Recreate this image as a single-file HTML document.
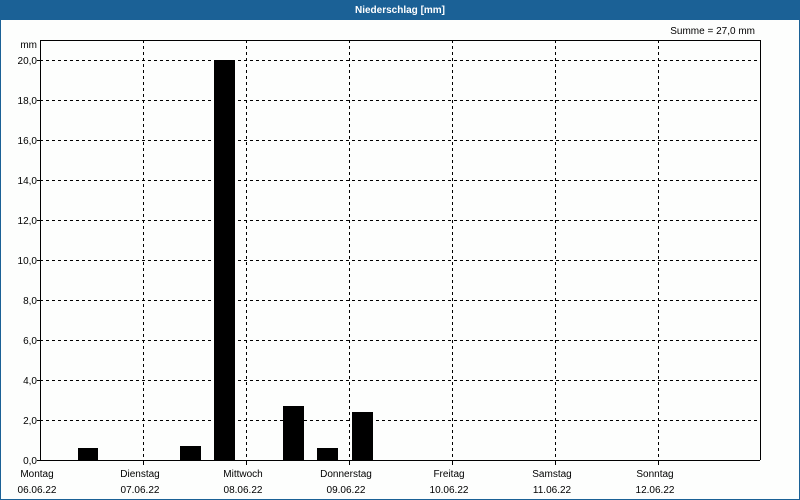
<!DOCTYPE html>
<html><head><meta charset="utf-8"><style>
html,body{margin:0;padding:0;background:#fff}
svg{display:block}
text{font-family:"Liberation Sans","DejaVu Sans",sans-serif;font-size:10px;fill:#000}
</style></head><body>
<svg width="800" height="500" viewBox="0 0 800 500" xmlns="http://www.w3.org/2000/svg">
<rect x="0" y="0" width="800" height="500" fill="#fdfefd"/>
<rect x="0.5" y="0.5" width="799" height="499" fill="none" stroke="#1b6196"/>
<rect x="0" y="0" width="800" height="20" fill="#1b6196"/>
<text x="400" y="13" text-anchor="middle" style="fill:#fff;font-weight:bold">Niederschlag [mm]</text>
<text x="755" y="34" text-anchor="end">Summe = 27,0 mm</text>
<text x="37" y="48" text-anchor="end">mm</text>
<g stroke="#000" stroke-width="1" stroke-dasharray="3,3" fill="none">
<path d="M40 60.5H760M40 100.5H760M40 140.5H760M40 180.5H760M40 220.5H760M40 260.5H760M40 300.5H760M40 340.5H760M40 380.5H760M40 420.5H760"/>
<path d="M143.5 40V460M246.5 40V460M349.5 40V460M452.5 40V460M555.5 40V460M658.5 40V460"/>
</g>
<g stroke="#000" stroke-width="1" fill="none">
<path d="M40.5 460V40.5H760.5V460"/>
<path d="M37 460.5H760"/>
<path d="M143.5 460V465M246.5 460V465M349.5 460V465M452.5 460V465M555.5 460V465M658.5 460V465"/>
<path d="M37 60.5H40M37 100.5H40M37 140.5H40M37 180.5H40M37 220.5H40M37 260.5H40M37 300.5H40M37 340.5H40M37 380.5H40M37 420.5H40"/>
</g>
<g text-anchor="end">
<text x="37" y="64">20,0</text><text x="37" y="104">18,0</text><text x="37" y="144">16,0</text>
<text x="37" y="184">14,0</text><text x="37" y="224">12,0</text><text x="37" y="264">10,0</text>
<text x="37" y="304">8,0</text><text x="37" y="344">6,0</text><text x="37" y="384">4,0</text>
<text x="37" y="424">2,0</text><text x="37" y="464">0,0</text>
</g>
<g fill="#000">
<rect x="78" y="448" width="20" height="12"/>
<rect x="180" y="446" width="21" height="14"/>
<rect x="214" y="60" width="21" height="400"/>
<rect x="283" y="406" width="21" height="54"/>
<rect x="317" y="448" width="21" height="12"/>
<rect x="352" y="412" width="21" height="48"/>
</g>
<g text-anchor="middle">
<text x="37" y="477">Montag</text><text x="37" y="493">06.06.22</text>
<text x="140" y="477">Dienstag</text><text x="140" y="493">07.06.22</text>
<text x="243" y="477">Mittwoch</text><text x="243" y="493">08.06.22</text>
<text x="346" y="477">Donnerstag</text><text x="346" y="493">09.06.22</text>
<text x="449" y="477">Freitag</text><text x="449" y="493">10.06.22</text>
<text x="552" y="477">Samstag</text><text x="552" y="493">11.06.22</text>
<text x="655" y="477">Sonntag</text><text x="655" y="493">12.06.22</text>
</g>
</svg>
</body></html>
